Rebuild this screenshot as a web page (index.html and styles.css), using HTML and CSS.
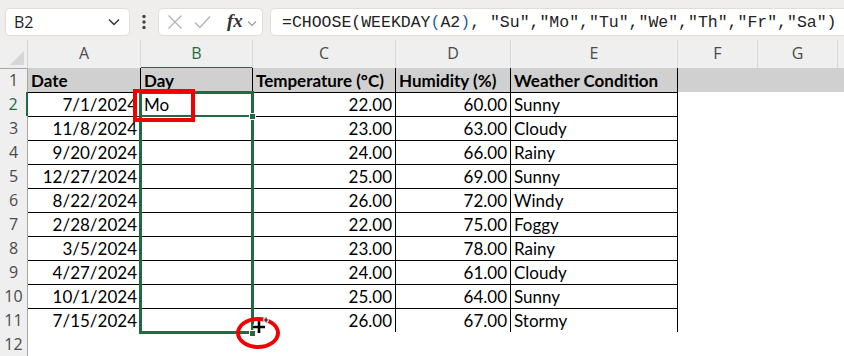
FILE: index.html
```html
<!DOCTYPE html>
<html>
<head>
<meta charset="utf-8">
<link rel="stylesheet" href="styles.css">
</head>
<body>
<div class="app">
  <div class="toolbar">
    <div class="namebox">
      <span class="nb-text">B2</span>
      <svg class="nb-chev" width="12" height="8" viewBox="0 0 12 8"><path d="M1 1.5 L6 6.5 L11 1.5" fill="none" stroke="#333" stroke-width="1.4"/></svg>
    </div>
    <div class="dots">
      <svg width="6" height="16" viewBox="0 0 6 16"><circle cx="3" cy="2.5" r="1.7" fill="#444"/><circle cx="3" cy="8" r="1.7" fill="#444"/><circle cx="3" cy="13.5" r="1.7" fill="#444"/></svg>
    </div>
    <div class="fxbox">
      <svg class="ic-x" width="16" height="16" viewBox="0 0 16 16"><path d="M1.5 1.5 L14.5 14.5 M14.5 1.5 L1.5 14.5" stroke="#b4b4b4" stroke-width="1.3" fill="none"/></svg>
      <svg class="ic-ok" width="17" height="14" viewBox="0 0 17 14"><path d="M1 7.5 L5.8 12.5 L16 1.5" stroke="#b4b4b4" stroke-width="1.3" fill="none"/></svg>
      <span class="fx">fx</span>
      <svg class="fx-chev" width="10" height="7" viewBox="0 0 10 7"><path d="M1 1.5 L5 5.5 L9 1.5" fill="none" stroke="#9a9a9a" stroke-width="1.2"/></svg>
    </div>
    <div class="formula">=CHOOSE(WEEKDAY<span class="par">(</span>A2<span class="par">)</span>, "Su","Mo","Tu","We","Th","Fr","Sa")</div>
  </div>

  <div class="sheet">
    <div class="row colhdr">
      <div class="corner"></div>
      <div class="ch">A</div>
      <div class="ch active">B</div>
      <div class="ch">C</div>
      <div class="ch">D</div>
      <div class="ch">E</div>
      <div class="ch">F</div>
      <div class="ch">G</div>
      <div class="ch last"></div>
    </div>

    <div class="row head">
      <div class="rh">1</div>
      <div class="c">Date</div>
      <div class="c">Day</div>
      <div class="c">Temperature (°C)</div>
      <div class="c">Humidity (%)</div>
      <div class="c">Weather Condition</div>
      <div class="e fill"></div><div class="e fill"></div><div class="e fill"></div>
    </div>

    <div class="row">
      <div class="rh active">2</div>
      <div class="c r">7/1/2024</div><div class="c">Mo</div><div class="c r">22.00</div><div class="c r">60.00</div><div class="c">Sunny</div>
      <div class="e"></div><div class="e"></div><div class="e"></div>
    </div>
    <div class="row">
      <div class="rh">3</div>
      <div class="c r">11/8/2024</div><div class="c"></div><div class="c r">23.00</div><div class="c r">63.00</div><div class="c">Cloudy</div>
      <div class="e"></div><div class="e"></div><div class="e"></div>
    </div>
    <div class="row">
      <div class="rh">4</div>
      <div class="c r">9/20/2024</div><div class="c"></div><div class="c r">24.00</div><div class="c r">66.00</div><div class="c">Rainy</div>
      <div class="e"></div><div class="e"></div><div class="e"></div>
    </div>
    <div class="row">
      <div class="rh">5</div>
      <div class="c r">12/27/2024</div><div class="c"></div><div class="c r">25.00</div><div class="c r">69.00</div><div class="c">Sunny</div>
      <div class="e"></div><div class="e"></div><div class="e"></div>
    </div>
    <div class="row">
      <div class="rh">6</div>
      <div class="c r">8/22/2024</div><div class="c"></div><div class="c r">26.00</div><div class="c r">72.00</div><div class="c">Windy</div>
      <div class="e"></div><div class="e"></div><div class="e"></div>
    </div>
    <div class="row">
      <div class="rh">7</div>
      <div class="c r">2/28/2024</div><div class="c"></div><div class="c r">22.00</div><div class="c r">75.00</div><div class="c">Foggy</div>
      <div class="e"></div><div class="e"></div><div class="e"></div>
    </div>
    <div class="row">
      <div class="rh">8</div>
      <div class="c r">3/5/2024</div><div class="c"></div><div class="c r">23.00</div><div class="c r">78.00</div><div class="c">Rainy</div>
      <div class="e"></div><div class="e"></div><div class="e"></div>
    </div>
    <div class="row">
      <div class="rh">9</div>
      <div class="c r">4/27/2024</div><div class="c"></div><div class="c r">24.00</div><div class="c r">61.00</div><div class="c">Cloudy</div>
      <div class="e"></div><div class="e"></div><div class="e"></div>
    </div>
    <div class="row">
      <div class="rh">10</div>
      <div class="c r">10/1/2024</div><div class="c"></div><div class="c r">25.00</div><div class="c r">64.00</div><div class="c">Sunny</div>
      <div class="e"></div><div class="e"></div><div class="e"></div>
    </div>
    <div class="row">
      <div class="rh">11</div>
      <div class="c r">7/15/2024</div><div class="c"></div><div class="c r">26.00</div><div class="c r">67.00</div><div class="c">Stormy</div>
      <div class="e"></div><div class="e"></div><div class="e"></div>
    </div>
    <div class="row">
      <div class="rh">12</div>
      <div class="e"></div><div class="e"></div><div class="e"></div><div class="e"></div><div class="e"></div>
      <div class="e"></div><div class="e"></div><div class="e"></div>
    </div>

    <div class="sel-range"></div>
    <div class="sel-active"></div>
    <div class="handle h1"></div>
    <div class="handle h2"></div>
    <div class="red-rect"></div>
    <div class="red-ellipse"></div>
    <svg class="cursor" width="22" height="22" viewBox="0 0 22 22">
      <path d="M9 8 V20 M3 14 H15" stroke="#fff" stroke-width="5" fill="none"/>
      <path d="M9 8 V20 M3 14 H15" stroke="#000" stroke-width="2.6" fill="none"/>
      <path d="M16 4 V10 M13 7 H19" stroke="#fff" stroke-width="3" fill="none"/>
      <path d="M16 4.5 V9.5 M13.5 7 H18.5" stroke="#000" stroke-width="1.1" fill="none"/>
    </svg>
  </div>
</div>
</body>
</html>
```

FILE: styles.css
```css
* { box-sizing: border-box; }
html, body { margin: 0; padding: 0; }
body { background: #fff; width: 844px; height: 356px; overflow: hidden; }

.app { width: 844px; }

.toolbar {
  height: 40px;
  background: #f0eded;
  display: flex;
  align-items: flex-start;
  padding-top: 8px;
  overflow: hidden;
}
.toolbar > * { flex-shrink: 0; }
.namebox {
  margin-left: 5px;
  width: 125px;
  height: 28px;
  background: #fff;
  border: 1px solid #e2dddd;
  border-radius: 5px;
  display: flex;
  align-items: center;
  justify-content: space-between;
  padding: 0 9px 0 8px;
}
.nb-text {
  font-family: "Open Sans", "DejaVu Sans", sans-serif;
  font-size: 16px;
  color: #222;
}
.dots {
  width: 28px;
  height: 28px;
  display: flex;
  align-items: center;
  justify-content: center;
}
.fxbox {
  width: 105px;
  height: 28px;
  background: #fff;
  border: 1px solid #e2dddd;
  border-radius: 5px;
  display: flex;
  align-items: center;
  padding-left: 8px;
}
.ic-x { margin-right: 11px; }
.ic-ok { margin-right: 16px; }
.fx {
  font-family: "Liberation Serif", "DejaVu Serif", serif;
  font-style: italic;
  font-weight: bold;
  font-size: 19px;
  color: #333;
  margin-right: 4px;
  margin-top: -2px;
}
.fx-chev { margin-top: 2px; }
.formula {
  margin-left: 7px;
  width: 600px;
  height: 28px;
  background: #fff;
  border: 1px solid #e2dddd;
  border-radius: 5px;
  padding-left: 11px;
  font-family: "Liberation Mono", "DejaVu Sans Mono", monospace;
  font-size: 16.5px;
  line-height: 27px;
  color: #222;
  white-space: nowrap;
}
.par { color: #1d5fa3; }

.sheet { position: relative; }

.row {
  display: grid;
  grid-template-columns: 28px 113px 112px 143px 115px 167px 80px 80px 6px;
  height: 24px;
}
.row.colhdr { height: 28px; }

.corner {
  position: relative;
  background: #efefef;
  border-right: 1px solid #d4d4d4;
  border-bottom: 1px solid #a6a6a6;
}
.corner::after {
  content: "";
  position: absolute;
  right: 3px;
  bottom: 3px;
  width: 0;
  height: 0;
  border-left: 14px solid transparent;
  border-bottom: 14px solid #d6d6d6;
}
.ch {
  background: #efefef;
  border-right: 1px solid #d9d9d9;
  border-bottom: 1px solid #a6a6a6;
  font-family: "Open Sans", "DejaVu Sans", sans-serif;
  font-size: 16px;
  color: #4a4a4a;
  text-align: center;
  line-height: 27px;
}
.ch.active {
  color: #1f6b42;
  border-bottom: 2px solid #1f6b42;
}
.ch.last { border-right: none; }

.rh {
  background: #efefef;
  border-right: 1px solid #a6a6a6;
  border-bottom: 1px solid #dadada;
  font-family: "Open Sans", "DejaVu Sans", sans-serif;
  font-size: 16px;
  color: #4a4a4a;
  text-align: center;
  line-height: 24px;
}
.rh.active {
  color: #1f6b42;
  border-right: 2px solid #1f6b42;
}

.c {
  border-right: 1px solid #000;
  border-bottom: 1px solid #000;
  font-family: "Lato", "Liberation Sans", sans-serif;
  font-size: 17px;
  color: #000;
  line-height: 24px;
  padding: 1px 3px 0;
  white-space: nowrap;
  overflow: hidden;
}
.c.r { text-align: right; }
.head .c { background: #d0d0d0; font-weight: bold; }
.e { background: #fff; }
.e.fill { background: #d0d0d0; }

.sel-range {
  position: absolute;
  left: 139px;
  top: 51px;
  width: 115px;
  height: 243px;
  border: 3px solid #1f6b42;
}
.sel-active {
  position: absolute;
  left: 140px;
  top: 75px;
  width: 114px;
  height: 2px;
  background: #1f6b42;
}
.handle {
  position: absolute;
  width: 7px;
  height: 7px;
  background: #1f6b42;
  border: 1px solid #fff;
}
.h1 { left: 249px; top: 73px; }
.h2 { left: 249px; top: 290px; }

.red-rect {
  position: absolute;
  left: 133px;
  top: 49px;
  width: 62px;
  height: 33px;
  border: 4px solid #f00000;
}
.red-ellipse {
  position: absolute;
  left: 236px;
  top: 277px;
  width: 44px;
  height: 32px;
  border: 4px solid #f00000;
  border-radius: 50%;
}
.cursor {
  position: absolute;
  left: 250px;
  top: 273px;
}
```
